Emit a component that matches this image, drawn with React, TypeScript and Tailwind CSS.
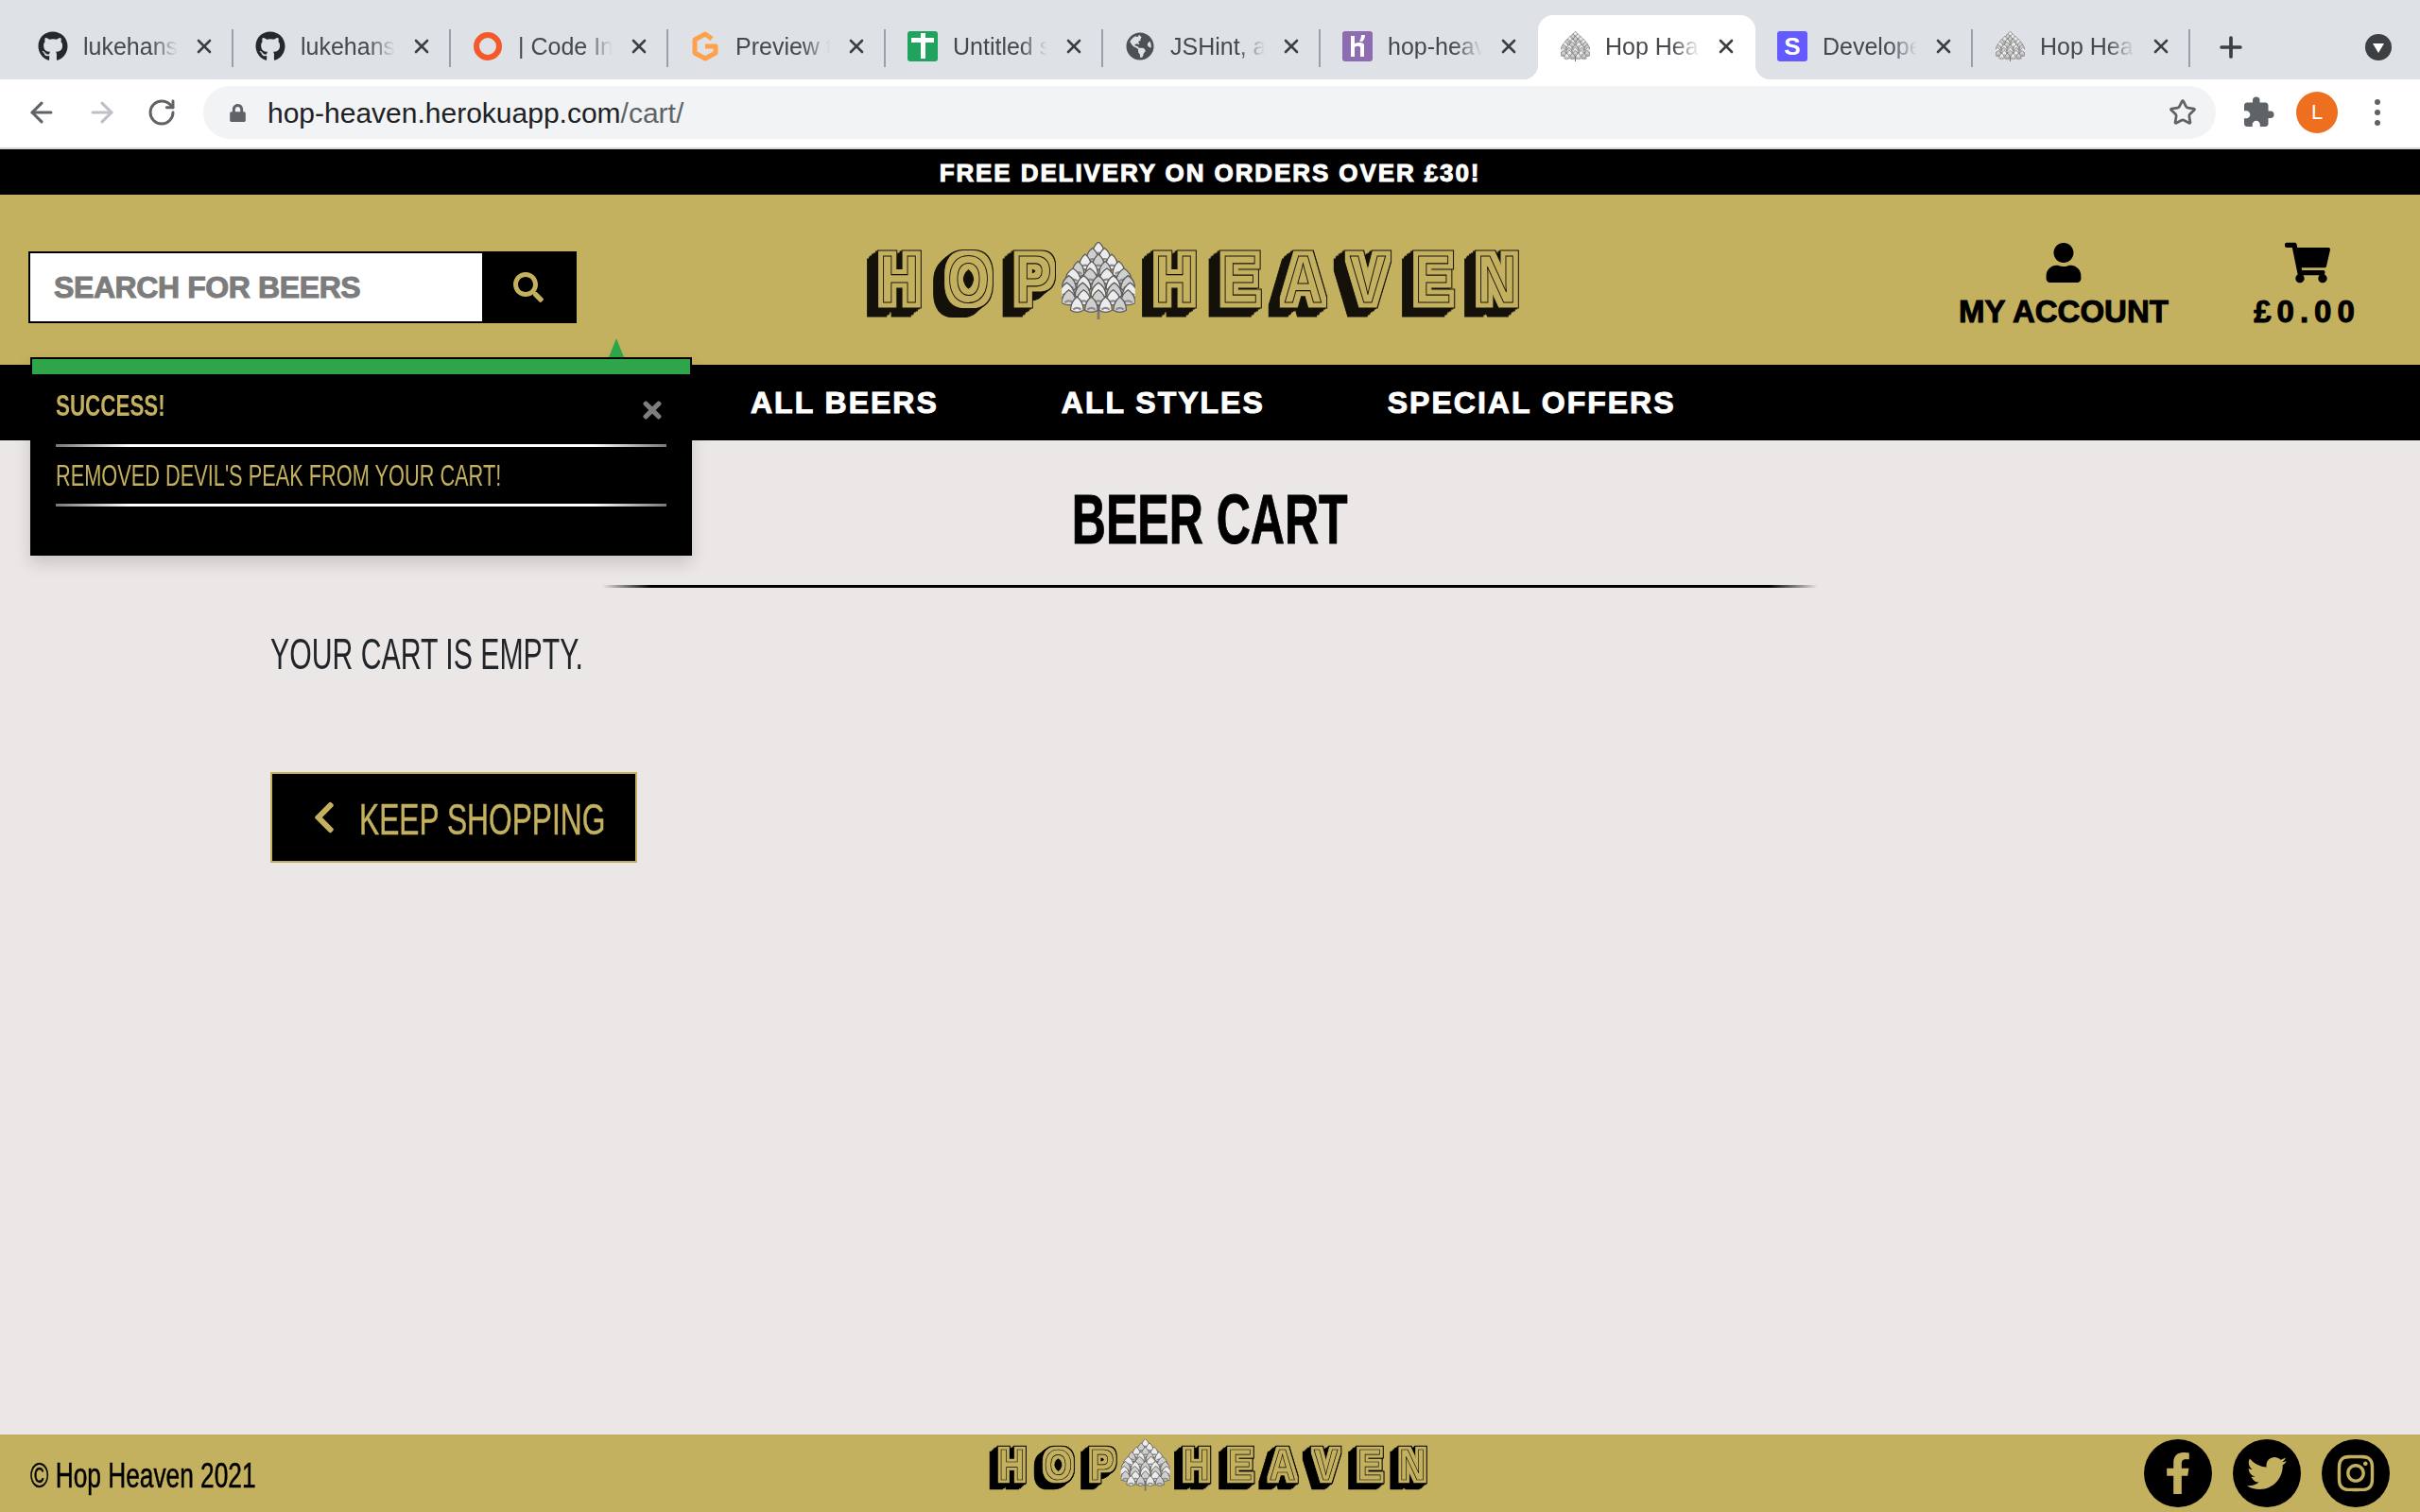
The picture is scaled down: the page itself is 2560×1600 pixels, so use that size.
import { ArrowLeft, ArrowRight, Plus, RotateCw, Star, X } from 'lucide-react';
import { FaChevronLeft, FaFacebookF, FaGithub, FaGlobeAmericas, FaInstagram, FaLock, FaSearch, FaShoppingCart, FaTimes, FaTwitter, FaUser } from 'react-icons/fa';
import { MdExtension } from 'react-icons/md';
import type { ReactNode } from 'react';

const coneRows = [
  { y: 0, half: 0, n: 1 },
  { y: 6, half: 6, n: 2 },
  { y: 12, half: 13, n: 3 },
  { y: 19, half: 20, n: 4 },
  { y: 26, half: 25, n: 4 },
  { y: 33, half: 29, n: 5 },
  { y: 40, half: 31, n: 5 },
  { y: 47, half: 29, n: 5 },
  { y: 54, half: 21, n: 4 },
];

function HopCone({ size }: { size: number }) {
  return (
    <svg width={size} height={size * 76 / 72} viewBox="0 0 72 76">
      <path d="M36 62 L36 76" stroke="#777" strokeWidth="2.5" />
      {coneRows.map((row, r) =>
        Array.from({ length: row.n }).map((_, i) => {
          const cx = row.n === 1 ? 36 : 36 - row.half + (2 * row.half * i) / (row.n - 1);
          const w = row.n === 1 ? 6 : Math.max(6, (row.half / row.n) * 1.2);
          const h = 13;
          return (
            <g key={row.y + '-' + i}>
              <path
                d={`M${cx - w} ${row.y + h} Q${cx - w} ${row.y + h * 0.35} ${cx} ${row.y} Q${cx + w} ${row.y + h * 0.35} ${cx + w} ${row.y + h} Q${cx} ${row.y + h * 1.3} ${cx - w} ${row.y + h} Z`}
                fill={(i + r) % 2 ? '#cfcfcf' : '#ececec'}
                stroke="#5c5c5c"
                strokeWidth="1.2"
              />
              <path d={`M${cx - w * 0.6} ${row.y + h * 0.95} Q${cx} ${row.y + h * 0.7} ${cx + w * 0.6} ${row.y + h * 0.95}`} fill="none" stroke="#8a8a8a" strokeWidth="2" />
            </g>
          );
        })
      )}
    </svg>
  );
}

// the logo lettering is live text, the block shadow comes from the filter
function Logo({ id, ink, width }: { id: string; ink: string; width: number }) {
  const sx = 0.82;
  const hop = [39.5, 112.5, 181.5].map((v) => v / sx).join(' ');
  const heaven = [330.5, 399.5, 466.5, 535, 604, 671.5].map((v) => v / sx).join(' ');
  const steps = [1, 2, 3, 4, 5, 6];
  return (
    <svg width={width} height={(width * 82) / 704} viewBox="0 0 704 82" className="overflow-visible block">
      <defs>
        <filter id={id} x="-5%" y="-20%" width="110%" height="150%" colorInterpolationFilters="sRGB">
          <feMorphology in="SourceAlpha" operator="dilate" radius="6" result="outer" />
          <feFlood floodColor={ink} />
          <feComposite in2="outer" operator="in" result="ink" />
          {steps.map((k) => (
            <feOffset key={k} in="ink" dx={-1.9 * k} dy={1.45 * k} result={'s' + k} />
          ))}
          <feMorphology in="SourceAlpha" operator="dilate" radius="4.6" result="inner" />
          <feFlood floodColor="#c4b15f" />
          <feComposite in2="inner" operator="in" result="face" />
          <feMerge>
            {steps.map((k) => (
              <feMergeNode key={k} in={'s' + k} />
            ))}
            <feMergeNode in="ink" />
            <feMergeNode in="face" />
            <feMergeNode in="SourceGraphic" />
          </feMerge>
        </filter>
      </defs>
      <g filter={`url(#${id})`}>
        <g transform={`scale(${sx} 1)`} fontFamily="Liberation Sans, sans-serif" fontWeight="700" fontSize="70" fill="#c4b15f" stroke={ink} strokeWidth="1.1" textAnchor="middle">
          <text x={hop} y="62">HOP</text>
          <text x={heaven} y="62">HEAVEN</text>
        </g>
      </g>
      <svg x="211" y="-2" width="78" height="82" viewBox="0 0 72 76" className="overflow-visible">
        <foreignObject width="72" height="76">
          <HopCone size={72} />
        </foreignObject>
      </svg>
    </svg>
  );
}

const tabs: { title: string; icon: ReactNode; divider: boolean; active?: boolean }[] = [
  { title: 'lukehans', icon: <FaGithub className="text-[32px] text-[#24292e]" />, divider: true },
  { title: 'lukehans', icon: <FaGithub className="text-[32px] text-[#24292e]" />, divider: true },
  { title: '| Code In', icon: <div className="w-[30px] h-[30px] rounded-full border-[6px] border-[#f5582b]" />, divider: true },
  {
    title: 'Preview t',
    icon: (
      <svg width="30" height="34" viewBox="0 0 30 34">
        <path d="M22 9 L15 4 L4 10 V24 L15 30 L26 24 V17 H15" fill="none" stroke="#ffa04a" strokeWidth="5" strokeLinejoin="round" />
      </svg>
    ),
    divider: true,
  },
  {
    title: 'Untitled s',
    icon: (
      <div className="w-[32px] h-[32px] rounded-[3px] bg-[#1fa35f] relative flex justify-center">
        <div className="w-[5px] h-[27px] mt-[2px] bg-white" />
        <div className="absolute left-[4px] top-[7px] w-[24px] h-[5px] bg-white" />
      </div>
    ),
    divider: true,
  },
  { title: 'JSHint, a', icon: <FaGlobeAmericas className="text-[30px] text-[#4d5156]" />, divider: true },
  {
    title: 'hop-heav',
    icon: (
      <svg width="32" height="32" viewBox="0 0 32 32">
        <rect width="32" height="32" rx="3" fill="#8d6cb1" />
        <path d="M9 5 H13 V13 C16 12 21 11 23 14 V27 H19 V17 C17 15 15 16 13 17 V27 H9 Z" fill="#fff" />
        <path d="M20 4 H24 C24 7 23 9 21 11 H18 C19 9 20 7 20 4 Z" fill="#fff" />
      </svg>
    ),
    divider: false,
  },
  { title: 'Hop Heav', icon: <HopCone size={31} />, divider: false, active: true },
  {
    title: 'Develope',
    icon: (
      <div className="w-[32px] h-[32px] rounded-[3px] bg-[#635bff] flex items-center justify-center text-white text-[26px] font-bold leading-none">S</div>
    ),
    divider: true,
  },
  { title: 'Hop Hea', icon: <HopCone size={31} />, divider: true },
];

function ChromeBar() {
  return (
    <div className="bg-white">
      <div className="h-[84px] bg-[#dee1e6] flex items-end pl-[17px] relative">
        {tabs.map((tab, i) => (
          <div
            key={i}
            className={tab.active ? 'w-[230px] h-[68px] bg-white rounded-t-[16px] relative flex items-center pl-[23px] pb-[2px]' : 'w-[230px] h-[68px] relative flex items-center pl-[23px] pb-[2px]'}
          >
            {tab.active && (
              <>
                <div className="absolute bottom-0 left-[-16px] w-[16px] h-[16px] bg-[radial-gradient(circle_at_0_0,#dee1e6_16px,#fff_16.5px)]" />
                <div className="absolute bottom-0 right-[-16px] w-[16px] h-[16px] bg-[radial-gradient(circle_at_100%_0,#dee1e6_16px,#fff_16.5px)]" />
              </>
            )}
            <div className="w-[32px] flex justify-center shrink-0">{tab.icon}</div>
            <div className="ml-[16px] w-[102px] overflow-hidden whitespace-nowrap text-[25px] leading-none text-[#45484d] [mask-image:linear-gradient(to_right,#000_70%,transparent_98%)]">
              {tab.title}
            </div>
            <X size={24} strokeWidth={2.6} className="text-[#3c4043] ml-[14px] shrink-0" />
            {tab.divider && <div className="absolute right-0 top-[15px] w-[2px] h-[40px] bg-[#9aa0a6]" />}
          </div>
        ))}
        <Plus size={34} strokeWidth={2.6} className="text-[#3c4043] ml-[26px] mb-[17px]" />
        <div className="absolute left-[2502px] top-[36px] w-[28px] h-[28px] rounded-full bg-[#3c4043] flex items-center justify-center">
          <div className="w-0 h-0 mt-[2px] border-x-[6px] border-x-transparent border-t-[10px] border-t-white" />
        </div>
      </div>
      <div className="h-[74px] flex items-center pb-[2px] border-b-2 border-[#d5d5d5]">
        <ArrowLeft size={34} strokeWidth={2.2} className="text-[#5f6368] ml-[27px]" />
        <ArrowRight size={34} strokeWidth={2.2} className="text-[#bdc1c6] ml-[30px]" />
        <RotateCw size={32} strokeWidth={2.2} className="text-[#5f6368] ml-[30px]" />
        <div className="ml-[28px] w-[2129px] h-[56px] bg-[#f1f3f4] rounded-full flex items-center">
          <FaLock className="text-[#5f6368] text-[19px] ml-[27px]" />
          <div className="ml-[22px] pt-[2px] text-[30px] leading-none text-[#202124]">
            hop-heaven.herokuapp.com<span className="text-[#5f6368]">/cart/</span>
          </div>
          <Star size={30} strokeWidth={2.2} className="text-[#5f6368] ml-auto mr-[20px]" />
        </div>
        <MdExtension className="text-[#5f6368] text-[36px] ml-[27px]" />
        <div className="ml-[22px] w-[44px] h-[44px] rounded-full bg-[#ee6f20] flex items-center justify-center text-white text-[22px] leading-none">L</div>
        <div className="ml-[39px] flex flex-col gap-[5px]">
          <div className="w-[6px] h-[6px] rounded-full bg-[#5f6368]" />
          <div className="w-[6px] h-[6px] rounded-full bg-[#5f6368]" />
          <div className="w-[6px] h-[6px] rounded-full bg-[#5f6368]" />
        </div>
      </div>
    </div>
  );
}

function Toast() {
  return (
    <div className="absolute left-[32px] top-[-8px] w-[700px] h-[210px] bg-black px-[2px] pt-[2px] shadow-[0_8px_16px_rgba(0,0,0,0.15)] z-10">
      <div className="absolute left-[612px] top-[-20px] w-0 h-0 border-x-[8px] border-x-transparent border-b-[20px] border-b-[#2ea54a]" />
      <div className="h-[16px] bg-[#2ea54a]" />
      <div className="px-[25px]">
        <div className="h-[74px] flex items-start justify-between pt-[13px]">
          <span className="inline-block origin-left scale-x-[0.7] text-[32px] leading-[40px] font-bold text-[#c4b15f] whitespace-nowrap">SUCCESS!</span>
          <FaTimes className="text-[#7e7e7e] text-[28px] mt-[11px] mr-[1px]" />
        </div>
        <div className="h-[3px] bg-[linear-gradient(90deg,#777,#fff_12%,#fff_88%,#777)]" />
        <div className="h-[60px] flex items-center">
          <span className="inline-block origin-left scale-x-[0.68] text-[32px] leading-[40px] text-[#c4b15f] whitespace-nowrap">REMOVED DEVIL'S PEAK FROM YOUR CART!</span>
        </div>
        <div className="h-[3px] bg-[linear-gradient(90deg,#777,#fff_12%,#fff_88%,#777)]" />
      </div>
    </div>
  );
}

export default function App() {
  return (
    <div className="min-h-screen h-[1600px] flex flex-col bg-[#ebe7e6] font-['Liberation_Sans',sans-serif] overflow-hidden">
      <ChromeBar />

      <div className="h-[48px] pt-[2px] bg-black flex items-center justify-center text-white text-[26px] font-bold leading-none tracking-[1.9px] [-webkit-text-stroke:1px_#fff]">
        FREE DELIVERY ON ORDERS OVER £30!
      </div>

      <header className="h-[180px] bg-[#c4b15f] grid grid-cols-[912px_704px_1fr] items-center">
        <div className="pl-[30px] pt-[16px]">
          <div className="w-[580px] h-[76px] border-2 border-black flex bg-white">
            <div className="flex-1 flex items-center pl-[25px] text-[32px] font-bold leading-none tracking-[-0.4px] text-[#7c7c7c] [-webkit-text-stroke:1px_#7c7c7c] whitespace-nowrap">SEARCH FOR BEERS</div>
            <div className="w-[98px] bg-black flex items-center justify-center">
              <FaSearch className="text-[#c4b15f] text-[32px]" />
            </div>
          </div>
        </div>
        <div className="pt-[6px]">
          <Logo id="logo-head" ink="#14110a" width={704} />
        </div>
        <div className="flex pt-[10px] text-black text-[33px] font-bold leading-none [-webkit-text-stroke:1px_#000]">
          <div className="ml-[455px] w-[224px] flex flex-col items-center gap-[14px] whitespace-nowrap">
            <FaUser className="text-[42px]" />
            <span>MY ACCOUNT</span>
          </div>
          <div className="ml-[91px] w-[109px] flex flex-col items-center gap-[14px] whitespace-nowrap">
            <FaShoppingCart className="text-[48px] -mb-[3px] -mt-[3px]" />
            <span className="tracking-[6px]">£0.00</span>
          </div>
        </div>
      </header>

      <nav className="relative h-[80px] bg-black">
        <Toast />
        <div className="h-full flex items-center pl-[794px] gap-[130px] text-white text-[32px] font-bold leading-none tracking-[2px] [-webkit-text-stroke:1px_#fff] whitespace-nowrap">
          <span>ALL BEERS</span>
          <span>ALL STYLES</span>
          <span>SPECIAL OFFERS</span>
        </div>
      </nav>

      <main className="flex-1 relative">
        <div className="pt-[46px] flex justify-center">
          <h1 className="scale-x-[0.667] text-[75px] font-bold leading-none text-black whitespace-nowrap [-webkit-text-stroke:1px_#000]">BEER CART</h1>
        </div>
        <div className="mx-[637px] mt-[32px] h-[3px] bg-[linear-gradient(90deg,transparent,#000_4%,#000_96%,transparent)]" />
        <div className="px-[286px]">
          <p className="mt-[47px] text-[46px] leading-none text-[#212529] origin-left scale-x-[0.657] whitespace-nowrap">YOUR CART IS EMPTY.</p>
          <button className="mt-[102px] w-[388px] h-[96px] bg-black border-2 border-[#c4b15f] flex items-center pl-[36px] text-[#c4b15f]">
            <FaChevronLeft className="text-[38px] shrink-0" />
            <span className="ml-[18px] mt-[2px] inline-block origin-left scale-x-[0.675] text-[47px] leading-none whitespace-nowrap [-webkit-text-stroke:0.5px_#c4b15f]">KEEP SHOPPING</span>
          </button>
        </div>
      </main>

      <footer className="h-[82px] bg-[#c4b15f] grid grid-cols-[1fr_auto_1fr] items-center pl-[32px] pr-[32px]">
        <div className="pt-[6px] text-[36px] leading-none text-black whitespace-nowrap origin-left scale-x-[0.73] [-webkit-text-stroke:0.5px_#000]">© Hop Heaven 2021</div>
        <div className="pb-[16px]">
          <Logo id="logo-foot" ink="#000" width={472} />
        </div>
        <div className="flex justify-end gap-[22px] text-[#c4b15f]">
          <div className="w-[72px] h-[72px] rounded-full bg-black flex items-center justify-center"><FaFacebookF className="text-[44px]" /></div>
          <div className="w-[72px] h-[72px] rounded-full bg-black flex items-center justify-center"><FaTwitter className="text-[42px]" /></div>
          <div className="w-[72px] h-[72px] rounded-full bg-black flex items-center justify-center"><FaInstagram className="text-[44px]" /></div>
        </div>
      </footer>
    </div>
  );
}
